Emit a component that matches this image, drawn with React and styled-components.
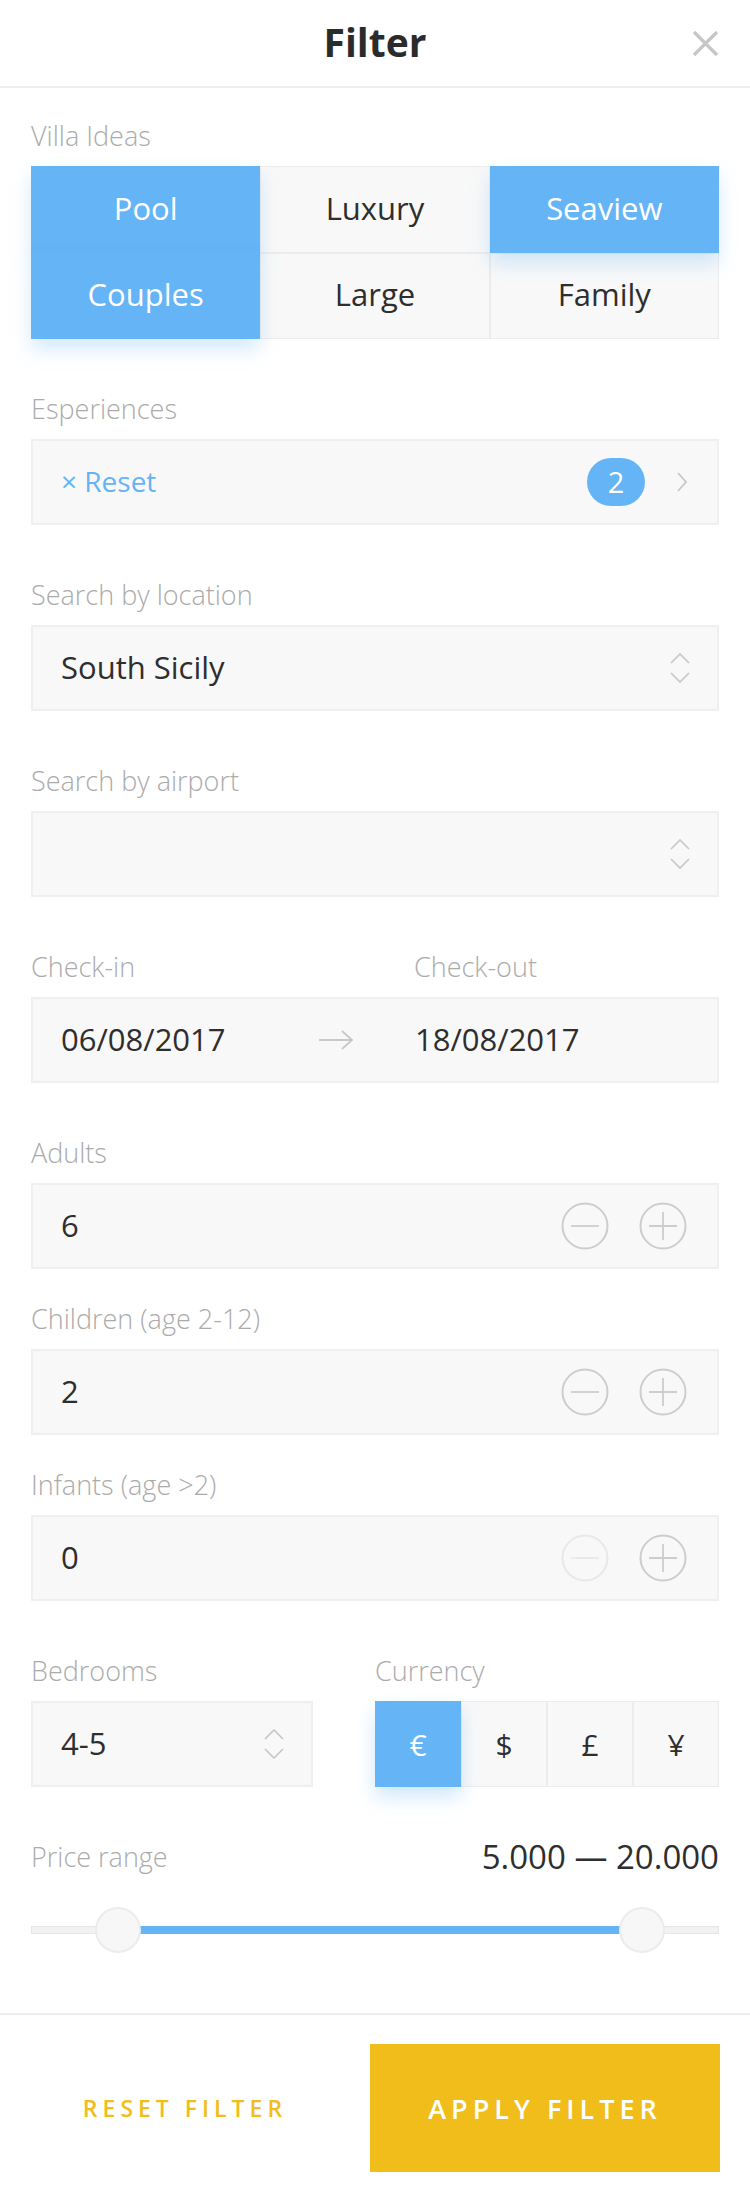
import React from "react";
import styled, { createGlobalStyle, css } from "styled-components";

const Global = createGlobalStyle`
  html, body { margin: 0; padding: 0; background: #fff; }
  body { font-family: "Open Sans", "Liberation Sans", sans-serif; color: #2e2e2e; }
  * { box-sizing: border-box; }
`;

const BLUE = "#64b4f6";
const GOLD = "#f0bd1a";
const FIELD_BG = "#f8f8f8";
const FIELD_BORDER = "#efefef";

const Page = styled.div`
  width: 750px;
  min-height: 2202px;
  display: flex;
  flex-direction: column;
  background: #fff;
`;

const Header = styled.header`
  height: 88px;
  border-bottom: 2px solid #ededed;
  display: grid;
  grid-template-columns: 1fr auto 1fr;
  align-items: center;
`;

const Title = styled.h1`
  grid-column: 2;
  margin: 0 0 4px;
  font-size: 39px;
  font-weight: 700;
  color: #2b2b2b;
  line-height: 1;
`;

const CloseButton = styled.button`
  justify-self: end;
  margin-right: 31px;
  width: 27px;
  height: 27px;
  padding: 0;
  border: 0;
  background: none;
  display: flex;
`;

const Content = styled.main`
  padding: 32px 31px 0;
  display: flex;
  flex-direction: column;
`;

const Section = styled.section`
  margin-top: ${(p) => p.$gap || 0}px;
`;

const Label = styled.div`
  font-size: 27px;
  font-weight: 300;
  line-height: 32px;
  color: #ababab;
  margin-bottom: 14px;
`;

const LabelRow = styled.div`
  display: grid;
  grid-template-columns: 383px 1fr;
`;

const IdeaGrid = styled.div`
  display: grid;
  grid-template-columns: repeat(3, 1fr);
  grid-auto-rows: 86.5px;
`;

const Tile = styled.button`
  border: 1px solid #ececec;
  background: ${FIELD_BG};
  font-family: inherit;
  font-size: 31px;
  color: #2e2e2e;
  display: flex;
  align-items: center;
  justify-content: center;
  padding: 0 0 3px;
  position: relative;
  ${(p) =>
    p.$active &&
    css`
      background: ${BLUE};
      border-color: ${BLUE};
      color: #fff;
      box-shadow: 0 10px 18px rgba(100, 180, 246, 0.28);
      z-index: 1;
    `}
`;

const Field = styled.div`
  height: 86px;
  background: ${FIELD_BG};
  border: 2px solid ${FIELD_BORDER};
  display: flex;
  align-items: center;
  padding: 0 ${(p) => p.$right ?? 27}px 0 28px;
  font-size: 31px;
  color: #2e2e2e;
`;

const Value = styled.span`
  flex: 1;
  margin-bottom: 3px;
`;

const ResetLink = styled.span`
  flex: 1;
  color: ${BLUE};
  font-size: 28px;
  display: flex;
  align-items: center;
  gap: 8px;
  margin-bottom: 3px;
`;

const Badge = styled.span`
  width: 58px;
  height: 48px;
  border-radius: 24px;
  background: ${BLUE};
  color: #fff;
  font-size: 29px;
  display: flex;
  align-items: center;
  justify-content: center;
  padding-bottom: 2px;
  margin-right: 31px;
`;

const DateValue = styled.span`
  width: 257px;
  margin-bottom: 3px;
`;

const DateValueEnd = styled.span`
  margin-left: 61px;
  margin-bottom: 3px;
`;

const Stepper = styled.div`
  display: flex;
  gap: 30px;
`;

const StepButton = styled.button`
  width: 48px;
  height: 48px;
  padding: 0;
  border: 0;
  background: none;
  display: flex;
`;

const TwoCols = styled.div`
  display: grid;
  grid-template-columns: 282px 1fr;
  column-gap: 62px;
`;

const CurrencyGroup = styled.div`
  display: grid;
  grid-template-columns: repeat(4, 1fr);
  height: 86px;
`;

const CurrencyCell = styled.button`
  border: 1px solid #ececec;
  background: ${FIELD_BG};
  font-family: inherit;
  font-size: 30px;
  color: #2e2e2e;
  padding: 0;
  ${(p) =>
    p.$active &&
    css`
      background: ${BLUE};
      border-color: ${BLUE};
      color: #fff;
      box-shadow: 0 10px 18px rgba(100, 180, 246, 0.3);
      position: relative;
      z-index: 1;
    `}
`;

const PriceHeader = styled.div`
  display: flex;
  justify-content: space-between;
  align-items: center;
`;

const PriceLabel = styled(Label)`
  margin-bottom: 0;
`;

const PriceValue = styled.div`
  font-size: 33px;
  line-height: 32px;
  color: #2e2e2e;
`;

const Slider = styled.div`
  position: relative;
  height: 46px;
  margin-top: 34px;
  display: flex;
  align-items: center;
`;

const Track = styled.div`
  width: 100%;
  height: 8px;
  background: #f2f2f2;
  border: 1px solid #e6e6e6;
`;

const TrackFill = styled.div`
  position: absolute;
  top: 19px;
  height: 8px;
  background: ${BLUE};
`;

const Thumb = styled.div`
  position: absolute;
  top: 0;
  width: 46px;
  height: 46px;
  margin-left: -23px;
  border-radius: 50%;
  background: #f7f7f7;
  border: 2px solid #ececec;
`;

const Footer = styled.footer`
  margin-top: auto;
  border-top: 2px solid #ededed;
  height: 189px;
  padding: 29px 30px 30px 0;
  display: grid;
  grid-template-columns: 1fr 350px;
`;

const ResetButton = styled.button`
  border: 0;
  background: none;
  font-family: inherit;
  font-size: 23px;
  font-weight: 600;
  letter-spacing: 5px;
  color: ${GOLD};
  padding: 0;
`;

const ApplyButton = styled.button`
  border: 0;
  background: ${GOLD};
  font-family: inherit;
  font-size: 27px;
  font-weight: 600;
  letter-spacing: 5px;
  color: #fff;
  padding: 0;
`;

const Icon = styled.svg`
  display: block;
  flex-shrink: 0;
`;

const CloseIcon = () => (
  <Icon width="27" height="27" viewBox="0 0 27 27">
    <path d="M2 2 L25 25 M25 2 L2 25" stroke="#c6c6c6" strokeWidth="3.2" fill="none" />
  </Icon>
);

const UpDown = () => (
  <Icon width="20" height="30" viewBox="0 0 20 30">
    <path d="M1 10 L10 1 L19 10 M1 20 L10 29 L19 20" stroke="#c8c8c8" strokeWidth="1.7" fill="none" />
  </Icon>
);

const ChevronRight = () => (
  <Icon width="12" height="22" viewBox="0 0 12 22">
    <path d="M2 2 L10 11 L2 20" stroke="#c8c8c8" strokeWidth="1.8" fill="none" />
  </Icon>
);

const Arrow = () => (
  <Icon width="36" height="22" viewBox="0 0 36 22">
    <path d="M1 11 L34 11 M24 2 L34 11 L24 20" stroke="#c8c8c8" strokeWidth="1.8" fill="none" />
  </Icon>
);

const CircleSign = ({ plus, disabled }) => {
  const c = disabled ? "#e8e8e8" : "#cdcdcd";
  return (
    <Icon width="48" height="48" viewBox="0 0 48 48">
      <circle cx="24" cy="24" r="22.5" stroke={c} strokeWidth="2" fill="none" />
      <path d={plus ? "M10 24 H38 M24 10 V38" : "M10 24 H38"} stroke={c} strokeWidth="1.8" fill="none" />
    </Icon>
  );
};

const ideas = [
  { name: "Pool", active: true },
  { name: "Luxury", active: false },
  { name: "Seaview", active: true },
  { name: "Couples", active: true },
  { name: "Large", active: false },
  { name: "Family", active: false },
];

const guests = [
  { label: "Adults", value: 6, minDisabled: false, gap: 54 },
  { label: "Children (age 2-12)", value: 2, minDisabled: false, gap: 34 },
  { label: "Infants (age >2)", value: 0, minDisabled: true, gap: 34 },
];

const currencies = [
  { sym: "€", active: true },
  { sym: "$" },
  { sym: "£" },
  { sym: "¥" },
];

const price = { low: 12.65, high: 88.8 };

export default function App() {
  return (
    <Page>
      <Global />
      <Header>
        <Title>Filter</Title>
        <CloseButton aria-label="Close">
          <CloseIcon />
        </CloseButton>
      </Header>

      <Content>
        <Section>
          <Label>Villa Ideas</Label>
          <IdeaGrid>
            {ideas.map((i) => (
              <Tile key={i.name} $active={i.active}>
                {i.name}
              </Tile>
            ))}
          </IdeaGrid>
        </Section>

        <Section $gap={54}>
          <Label>Esperiences</Label>
          <Field $right={29}>
            <ResetLink>× Reset</ResetLink>
            <Badge>2</Badge>
            <ChevronRight />
          </Field>
        </Section>

        <Section $gap={54}>
          <Label>Search by location</Label>
          <Field>
            <Value>South Sicily</Value>
            <UpDown />
          </Field>
        </Section>

        <Section $gap={54}>
          <Label>Search by airport</Label>
          <Field>
            <Value />
            <UpDown />
          </Field>
        </Section>

        <Section $gap={54}>
          <LabelRow>
            <Label>Check-in</Label>
            <Label>Check-out</Label>
          </LabelRow>
          <Field>
            <DateValue>06/08/2017</DateValue>
            <Arrow />
            <DateValueEnd>18/08/2017</DateValueEnd>
          </Field>
        </Section>

        {guests.map((g) => (
          <Section key={g.label} $gap={g.gap}>
            <Label>{g.label}</Label>
            <Field $right={30}>
              <Value>{g.value}</Value>
              <Stepper>
                <StepButton aria-label="minus">
                  <CircleSign disabled={g.minDisabled} />
                </StepButton>
                <StepButton aria-label="plus">
                  <CircleSign plus />
                </StepButton>
              </Stepper>
            </Field>
          </Section>
        ))}

        <Section $gap={54}>
          <TwoCols>
            <div>
              <Label>Bedrooms</Label>
              <Field>
                <Value>4-5</Value>
                <UpDown />
              </Field>
            </div>
            <div>
              <Label>Currency</Label>
              <CurrencyGroup>
                {currencies.map((c) => (
                  <CurrencyCell key={c.sym} $active={c.active}>
                    {c.sym}
                  </CurrencyCell>
                ))}
              </CurrencyGroup>
            </div>
          </TwoCols>
        </Section>

        <Section $gap={54}>
          <PriceHeader>
            <PriceLabel>Price range</PriceLabel>
            <PriceValue>5.000 — 20.000</PriceValue>
          </PriceHeader>
          <Slider>
            <Track />
            <TrackFill style={{ left: `${price.low}%`, width: `${price.high - price.low}%` }} />
            <Thumb style={{ left: `${price.low}%` }} />
            <Thumb style={{ left: `${price.high}%` }} />
          </Slider>
        </Section>
      </Content>

      <Footer>
        <ResetButton>RESET FILTER</ResetButton>
        <ApplyButton>APPLY FILTER</ApplyButton>
      </Footer>
    </Page>
  );
}
